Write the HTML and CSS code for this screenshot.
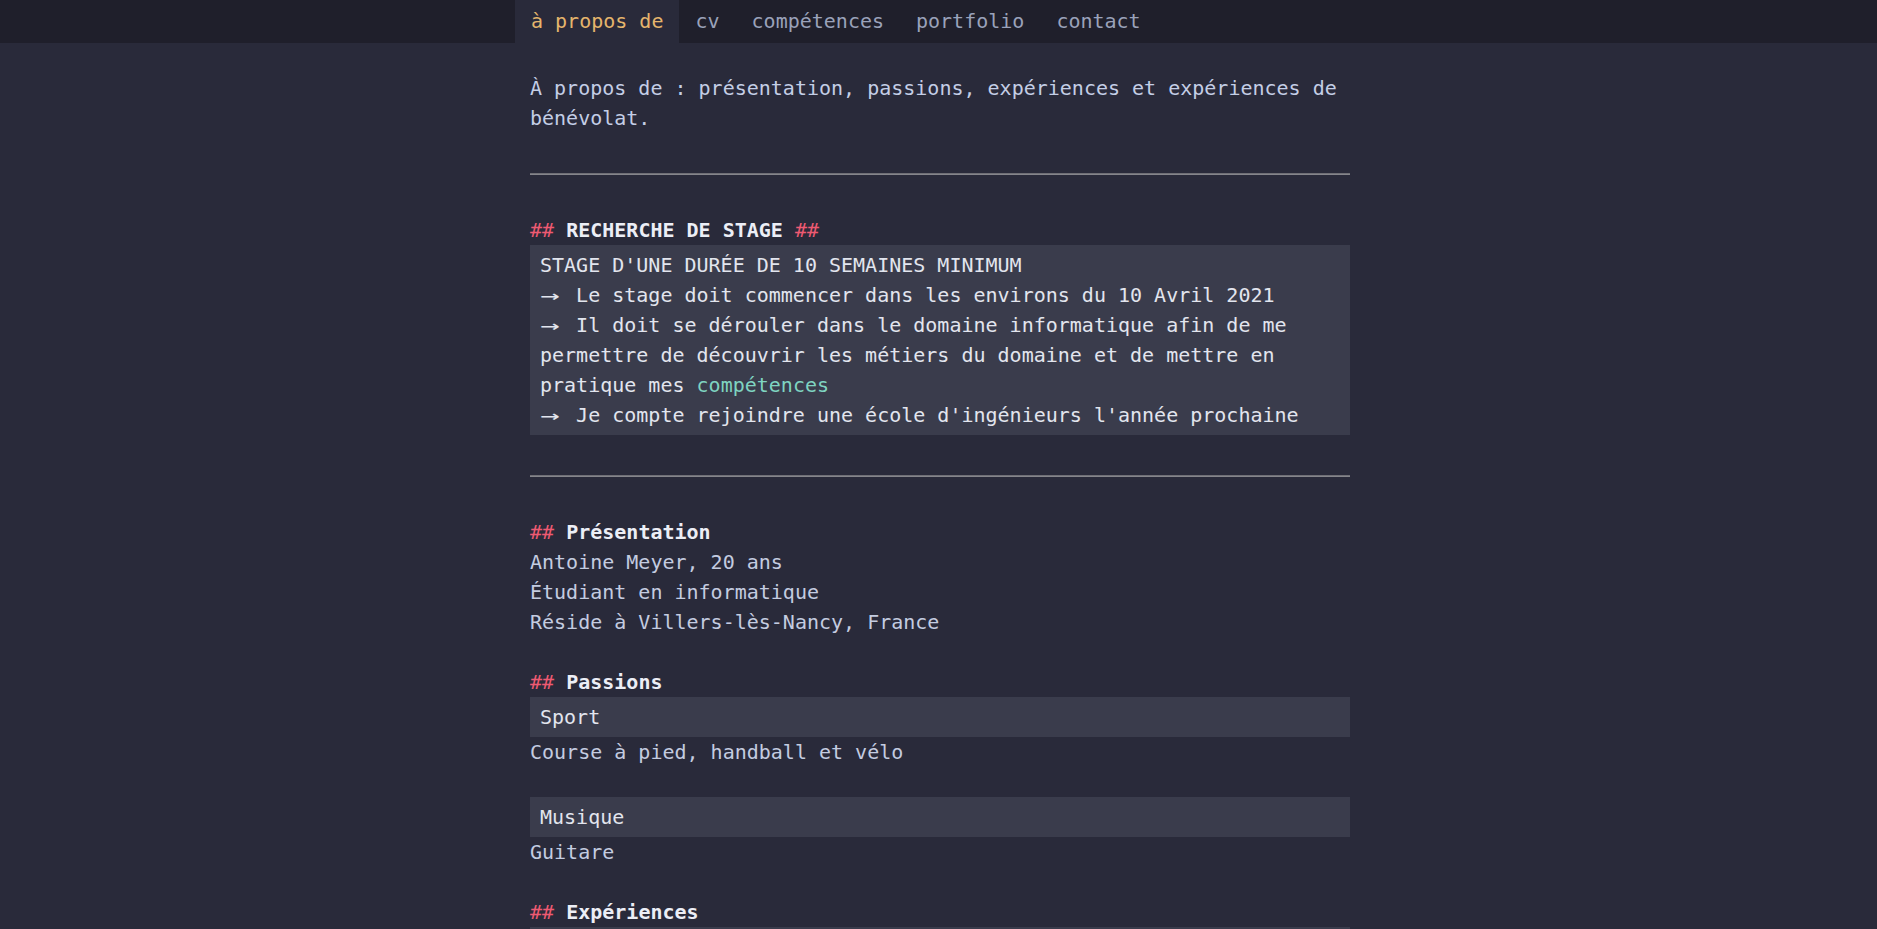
FILE: index.html
```html
<!DOCTYPE html>
<html lang="fr">
<head>
<meta charset="utf-8">
<title>À propos de</title>
<link rel="stylesheet" href="styles.css">
</head>
<body>
<header class="nav">
  <nav class="nav-inner">
    <a class="nav-link active" href="#">à propos de</a>
    <a class="nav-link" href="#">cv</a>
    <a class="nav-link" href="#">compétences</a>
    <a class="nav-link" href="#">portfolio</a>
    <a class="nav-link" href="#">contact</a>
  </nav>
</header>
<main class="page">
  <p class="intro">À propos de : présentation, passions, expériences et expériences de bénévolat.</p>
  <hr class="rule">
  <section class="section">
    <h2 class="title"><span class="hash">##</span> RECHERCHE DE STAGE <span class="hash">##</span></h2>
    <div class="box box-stage">
      STAGE D'UNE DURÉE DE 10 SEMAINES MINIMUM<br>
      <span class="arrow">→</span> Le stage doit commencer dans les environs du 10 Avril 2021<br>
      <span class="arrow">→</span> Il doit se dérouler dans le domaine informatique afin de me permettre de découvrir les métiers du domaine et de mettre en pratique mes <a class="link" href="#">compétences</a><br>
      <span class="arrow">→</span> Je compte rejoindre une école d'ingénieurs l'année prochaine
    </div>
  </section>
  <hr class="rule">
  <section class="section">
    <h2 class="title"><span class="hash">##</span> Présentation</h2>
    <p class="text">Antoine Meyer, 20 ans<br>Étudiant en informatique<br>Réside à Villers-lès-Nancy, France</p>
  </section>
  <section class="section">
    <h2 class="title"><span class="hash">##</span> Passions</h2>
    <div class="item">
      <div class="box">Sport</div>
      <p class="text">Course à pied, handball et vélo</p>
    </div>
    <div class="item">
      <div class="box">Musique</div>
      <p class="text">Guitare</p>
    </div>
  </section>
  <section class="section">
    <h2 class="title"><span class="hash">##</span> Expériences</h2>
    <div class="item">
      <div class="box">Expérience</div>
      <p class="text">&nbsp;</p>
    </div>
  </section>
</main>
</body>
</html>
```
FILE: styles.css
```css
html, body {
  margin: 0;
  padding: 0;
}
body {
  background: #292a3a;
  color: #c4cce0;
  font-family: "DejaVu Sans Mono", "Liberation Mono", monospace;
  font-size: 20px;
  line-height: 30px;
}
.nav {
  background: #1f1f2b;
  height: 43px;
}
.nav-inner {
  max-width: 850px;
  padding-left: 3px;
  margin: 0 auto;
  display: flex;
  height: 43px;
}
.nav-link {
  display: flex;
  align-items: center;
  padding: 0 16px 2px;
  color: #9aa2ba;
  text-decoration: none;
}
.nav-link.active {
  background: #292a3a;
  color: #e5b56c;
}
.page {
  max-width: 820px;
  padding: 30px 0 40px 3px;
  margin: 0 auto;
}
.intro {
  margin: 0;
  color: #c4cee6;
}
.rule {
  margin: 40px 0;
  border: 0;
  border-top: 1px solid #6f6f76;
  border-bottom: 1px solid #85858b;
  height: 0;
}
.section {
  margin: 0;
}
.title {
  margin: 0;
  font-size: 20px;
  line-height: 30px;
  font-weight: bold;
  color: #eceef6;
}
.hash {
  color: #ee5a72;
  font-weight: normal;
}
.box {
  background: #3a3c4c;
  padding: 5px 10px;
  color: #e2e5ee;
}
.arrow {
  display: inline-block;
  width: 2ch;
  transform: scaleX(1.6);
  transform-origin: left center;
}
.link {
  color: #7fd4c1;
  text-decoration: none;
}
.text {
  margin: 0 0 30px;
}
.item {
  margin: 0;
}
```
